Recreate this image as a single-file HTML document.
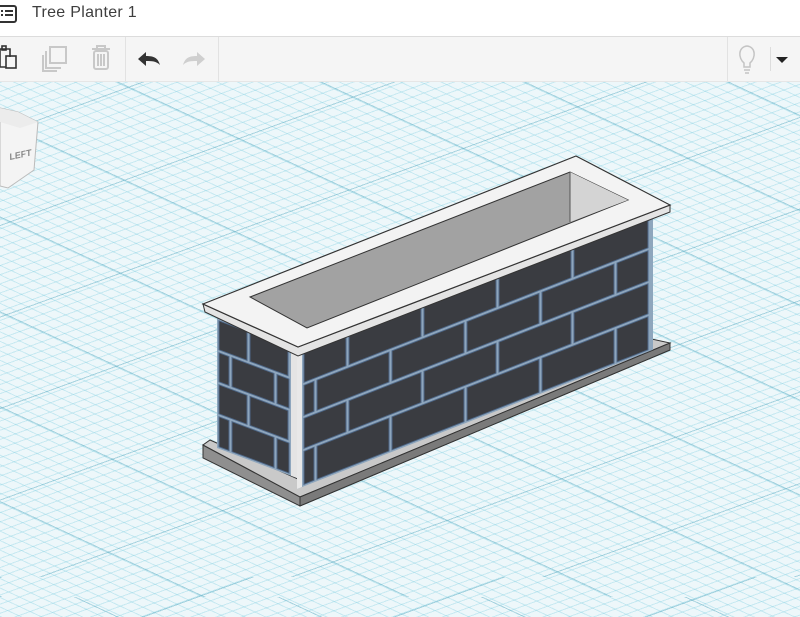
<!DOCTYPE html>
<html><head><meta charset="utf-8"><style>
html,body{margin:0;padding:0;width:800px;height:617px;overflow:hidden;font-family:"Liberation Sans",sans-serif;}
#hdr{position:absolute;left:0;top:0;width:800px;height:36px;background:#fff;border-bottom:1px solid #dcdcdc;}
#hdr .t{position:absolute;left:32px;top:4px;font-size:16px;color:#3e3e3e;letter-spacing:0.3px;}
#tb{position:absolute;left:0;top:37px;width:800px;height:44px;background:#f5f5f5;border-bottom:1px solid #e6e6e6;}
.sep{position:absolute;top:0;width:1px;height:44px;background:#e2e2e2;}
#grid{position:absolute;left:0;top:82px;width:800px;height:535px;background-color:#edf7fa;
background-image:
repeating-linear-gradient(160deg, rgba(80,165,190,0.45) 0 1px, transparent 1px 86px),
repeating-linear-gradient(25deg, rgba(80,165,190,0.45) 0 1px, transparent 1px 86px),
repeating-linear-gradient(160deg, rgba(110,200,220,0.3) 0 1px, transparent 1px 8.6px),
repeating-linear-gradient(25deg, rgba(110,200,220,0.3) 0 1px, transparent 1px 8.6px);
background-position:0 -40px,0 -20px,0 0,0 0;}
svg{position:absolute;left:0;top:0;}
</style></head><body>
<div id="grid"></div>
<div id="hdr"><div class="t">Tree Planter 1</div>
<svg width="20" height="36" style="left:0;top:0"><rect x="-4" y="6" width="20" height="16" rx="2" fill="none" stroke="#333" stroke-width="2"/><rect x="1" y="10" width="2" height="2" fill="#333"/><rect x="1" y="14" width="2" height="2" fill="#333"/><rect x="5" y="10" width="8" height="2" fill="#333"/><rect x="5" y="14" width="8" height="2" fill="#333"/></svg>
</div>
<div id="tb">
<div class="sep" style="left:125px"></div>
<div class="sep" style="left:218px"></div>
<div class="sep" style="left:727px"></div>
<div class="sep" style="left:770px;top:10px;height:24px;background:#ddd"></div>
<svg width="800" height="44">
<g fill="none" stroke="#333" stroke-width="1.6"><path d="M-2 12 H10 V20 M0 12 V30 H6"/><rect x="6" y="19" width="10" height="12"/><rect x="2" y="9" width="4" height="4"/></g>
<g fill="none" stroke="#c8c8c8" stroke-width="2"><rect x="50" y="10" width="16" height="16"/><path d="M46 14 V31 H61 M43 18 V34 H57"/></g>
<g fill="none" stroke="#c8c8c8" stroke-width="2"><path d="M92 12 H110 M97 12 V9 H105 V12"/><rect x="94" y="14" width="14" height="18" rx="2"/><path d="M98 17 V29 M101 17 V29 M104 17 V29"/></g>
<path d="M138 22 L146 15 V19 C154 19 158 21 160 28 C156 24 152 24 146 24 V29 Z" fill="#333"/>
<path d="M205 22 L197 15 V19 C189 19 185 21 183 28 C187 24 191 24 197 24 V29 Z" fill="#cfcfcf"/>
<g fill="none" stroke="#c4c4c4" stroke-width="1.5"><path d="M744 30 V26 C738 21 738 10 747 9 C756 10 756 21 750 26 V30 Z"/><path d="M744 33 H750 M745 36 H749"/></g>
<path d="M776 20 H788 L782 26 Z" fill="#222"/>
</svg>
</div>
<svg width="800" height="617">
<g>
<polygon points="0,108 18,112 38,122 34,170 8,188 0,186" fill="#f4f4f4" stroke="#bbb"/>
<polygon points="0,108 18,112 38,122 20,128 0,122" fill="#ececec"/>
<text x="10" y="160" font-size="9" fill="#888" transform="rotate(-12 10 160)" font-style="italic" font-weight="bold">LEFT</text>
</g>
<polygon points="203,445 300,497 670,343 670,350 300,506 203,458" fill="#8f8f8f" stroke="#333" stroke-width="1"/>
<polygon points="203,445 300,497 670,343 610,330 300,480 210,440" fill="#c9c9c9" stroke="#333" stroke-width="1"/>
<polygon points="300,497 670,343 670,350 300,506" fill="#7a7a7a" stroke="#333"/>
<g transform="matrix(1,0.375,0,1,217,318)">
<rect x="0" y="0" width="80" height="130" fill="#8ea6bd"/>
<g fill="#3a3c41" stroke="#4d6686" stroke-width="1">
<rect x="2" y="2" width="28" height="29"/><rect x="33" y="2" width="38" height="29"/>
<rect x="2" y="34" width="10" height="29"/><rect x="15" y="34" width="42" height="29"/><rect x="60" y="34" width="12" height="29"/>
<rect x="2" y="66" width="28" height="29"/><rect x="33" y="66" width="38" height="29"/>
<rect x="2" y="98" width="10" height="30"/><rect x="15" y="98" width="42" height="30"/><rect x="60" y="98" width="12" height="30"/>
</g>
<rect x="74" y="0" width="6" height="130" fill="#e4e4e4"/>
</g>
<g transform="matrix(1,-0.391,0,1,297,353)">
<rect x="0" y="0" width="356" height="136" fill="#8ea6bd"/>
<rect x="0" y="0" width="5" height="136" fill="#e8e8e8"/>
<g fill="#3a3c41" stroke="#4d6686" stroke-width="1">
<rect x="7" y="2" width="42" height="30"/><rect x="52" y="2" width="72" height="30"/><rect x="127" y="2" width="72" height="30"/><rect x="202" y="2" width="72" height="30"/><rect x="277" y="2" width="74" height="30"/>
<rect x="7" y="35" width="10" height="30"/><rect x="20" y="35" width="72" height="30"/><rect x="95" y="35" width="72" height="30"/><rect x="170" y="35" width="72" height="30"/><rect x="245" y="35" width="72" height="30"/><rect x="320" y="35" width="31" height="30"/>
<rect x="7" y="68" width="42" height="30"/><rect x="52" y="68" width="72" height="30"/><rect x="127" y="68" width="72" height="30"/><rect x="202" y="68" width="72" height="30"/><rect x="277" y="68" width="74" height="30"/>
<rect x="7" y="101" width="10" height="33"/><rect x="20" y="101" width="72" height="33"/><rect x="95" y="101" width="72" height="33"/><rect x="170" y="101" width="72" height="33"/><rect x="245" y="101" width="72" height="33"/><rect x="320" y="101" width="31" height="33"/>
</g>
</g>
<polygon points="203,304 298,347 670,205 670,212 298,356 205,312" fill="#e4e4e4" stroke="#333" stroke-width="1"/>
<polygon points="203,304 576,156 670,205 298,347" fill="#f3f3f3" stroke="#333" stroke-width="1.2"/>
<polygon points="250,297 570,172 628,200 307,328" fill="#a2a2a2" stroke="#333" stroke-width="1"/>
<polygon points="570,172 628,200 570,222" fill="#d4d4d4"/>
<line x1="570" y1="172" x2="570" y2="222" stroke="#555" stroke-width="1"/>
</svg>
</body></html>
